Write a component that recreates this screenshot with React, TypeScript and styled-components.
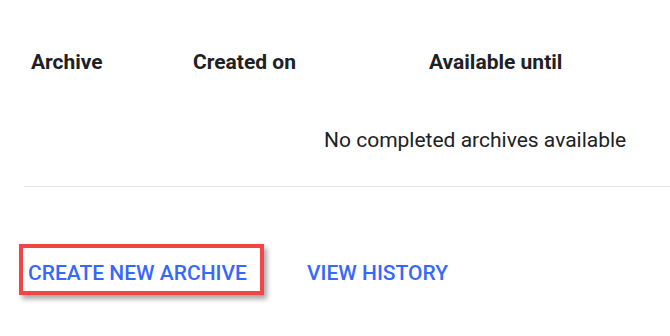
import styled, { createGlobalStyle } from "styled-components";

const GlobalStyle = createGlobalStyle`
  html, body {
    margin: 0;
    padding: 0;
    background: #ffffff;
  }
  body {
    font-family: Roboto, "Liberation Sans", Arial, sans-serif;
    color: #202124;
  }
`;

const Page = styled.div`
  width: 670px;
  height: 336px;
  overflow: hidden;
  padding: 50px 0 0 24px;
  box-sizing: border-box;
`;

const Table = styled.div`
  width: 902px;
  border-bottom: 1px solid #e3e3e3;
`;

const HeaderRow = styled.div`
  display: grid;
  grid-template-columns: 162px 236px 1fr;
  padding-left: 7px;
  height: 24px;
  align-items: center;
`;

const HeaderCell = styled.div`
  font-size: 21px;
  line-height: 24px;
  font-weight: 700;
  color: #202124;
  white-space: nowrap;
`;

const EmptyRow = styled.div`
  padding: 54px 0 34px 300px;
  font-size: 21px;
  line-height: 24px;
  color: #202124;
  white-space: nowrap;
`;

const Actions = styled.div`
  display: flex;
  align-items: flex-start;
  gap: 43px;
  margin-top: 57px;
  margin-left: -5px;
`;

const Highlight = styled.div`
  border: 4px solid #f24646;
  box-shadow: 3px 4px 5px rgba(0, 0, 0, 0.35);
  padding: 13px 13px 6px 5px;
`;

const TextButton = styled.button<{ $offset?: number }>`
  background: none;
  border: none;
  padding: 0;
  margin-top: ${(p) => p.$offset ?? 0}px;
  font-family: Roboto, "Liberation Sans", Arial, sans-serif;
  font-size: 21px;
  line-height: 24px;
  font-weight: 500;
  color: #3768fb;
  text-transform: uppercase;
  cursor: pointer;
  white-space: nowrap;
`;

const App = () => {
  return (
    <>
      <GlobalStyle />
      <Page>
        <Table>
          <HeaderRow>
            <HeaderCell>Archive</HeaderCell>
            <HeaderCell>Created on</HeaderCell>
            <HeaderCell>Available until</HeaderCell>
          </HeaderRow>
          <EmptyRow>No completed archives available</EmptyRow>
        </Table>
        <Actions>
          <Highlight>
            <TextButton>Create new archive</TextButton>
          </Highlight>
          <TextButton $offset={17}>View history</TextButton>
        </Actions>
      </Page>
    </>
  );
};

export default App;
